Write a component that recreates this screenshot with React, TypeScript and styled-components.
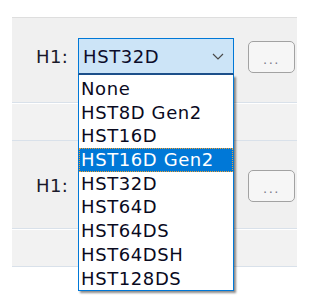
import React from 'react'
import styled, { createGlobalStyle } from 'styled-components'

const GlobalStyle = createGlobalStyle`
  html, body {
    margin: 0;
    background: #ffffff;
    font-family: 'DejaVu Sans', 'Liberation Sans', sans-serif;
  }
`

const Page = styled.div`
  padding: 17px 0 0 12px;
  width: 297px;
  min-height: 303px;
  box-sizing: border-box;
`

const Panel = styled.div`
  background: #f0f0f0;
  border-top: 1px solid #dedede;
`

const Group = styled.div<{ height: number; padTop: number }>`
  height: ${(props) => props.height}px;
  padding-top: ${(props) => props.padTop}px;
  box-sizing: border-box;
`

const Band = styled.div`
  height: 37px;
  background: #f2f2f2;
  border-top: 1px solid #d9e1ea;
  border-bottom: 1px solid #d9e1ea;
  box-shadow: inset 0 1px 0 #ffffff;
`

const Row = styled.div`
  display: flex;
  align-items: center;
`

const Label = styled.div`
  width: 56px;
  flex-shrink: 0;
  padding-right: 10px;
  text-align: right;
  font-size: 18px;
  letter-spacing: 0.3px;
  color: #1a1a2a;
`

const ComboWrap = styled.div`
  position: relative;
  flex-shrink: 0;
`

const Combo = styled.div<{ open?: boolean }>`
  width: 156px;
  height: 37px;
  box-sizing: border-box;
  display: flex;
  align-items: center;
  justify-content: space-between;
  padding: 0 9px 0 4px;
  background: ${(props) => (props.open ? '#cce4f7' : '#ffffff')};
  border: 1px solid ${(props) => (props.open ? '#0078d7' : '#7a7a7a')};
  border-bottom-width: ${(props) => (props.open ? 2 : 1)}px;
  border-bottom-color: ${(props) => (props.open ? '#1c4f8a' : '#7a7a7a')};
  font-size: 18px;
  letter-spacing: 0.6px;
  color: #0c0c2a;
`

const MoreButton = styled.div`
  width: 47px;
  height: 32px;
  flex-shrink: 0;
  margin-left: 14px;
  box-sizing: border-box;
  border: 1px solid #a2a2a2;
  border-radius: 5px;
  background: #f6f6f6;
  display: flex;
  align-items: center;
  justify-content: center;
  padding-top: 5px;
  font-size: 13px;
  letter-spacing: 1.5px;
  color: #7c7c8c;
`

const List = styled.div`
  position: absolute;
  top: 100%;
  left: 0;
  width: 156px;
  box-sizing: border-box;
  padding-top: 2px;
  background: #ffffff;
  border: 1px solid #0078d7;
  border-top: none;
  box-shadow: 2px 2px 2px rgba(0, 0, 0, 0.45);
  z-index: 10;
`

const Item = styled.div<{ selected?: boolean }>`
  height: 23.7px;
  line-height: 23.7px;
  padding-left: 2px;
  box-sizing: border-box;
  font-size: 18px;
  letter-spacing: 0.6px;
  white-space: nowrap;
  color: ${(props) => (props.selected ? '#ffffff' : '#0a0a1e')};
  background: ${(props) => (props.selected ? '#0078d7' : 'transparent')};
  outline: ${(props) => (props.selected ? '1px dotted #f0a030' : 'none')};
  outline-offset: -1px;
`

const Chevron = () => (
  <svg width="12" height="7" viewBox="0 0 12 7">
    <path d="M1 1 L6 6 L11 1" fill="none" stroke="#4a4a4a" strokeWidth="1.2" />
  </svg>
)

const options = [
  'None',
  'HST8D Gen2',
  'HST16D',
  'HST16D Gen2',
  'HST32D',
  'HST64D',
  'HST64DS',
  'HST64DSH',
  'HST128DS',
]

export default function App() {
  return (
    <>
      <GlobalStyle />
      <Page>
        <Panel>
          <Group height={84} padTop={20}>
            <Row>
              <Label>H1:</Label>
              <ComboWrap>
                <Combo open>
                  <span>HST32D</span>
                  <Chevron />
                </Combo>
                <List>
                  {options.map((option) => (
                    <Item key={option} selected={option === 'HST16D Gen2'}>
                      {option}
                    </Item>
                  ))}
                </List>
              </ComboWrap>
              <MoreButton>...</MoreButton>
            </Row>
          </Group>
          <Band />
          <Group height={87} padTop={26}>
            <Row>
              <Label>H1:</Label>
              {/* covered by the open list above */}
              <ComboWrap>
                <Combo />
              </ComboWrap>
              <MoreButton>...</MoreButton>
            </Row>
          </Group>
          <Band />
        </Panel>
      </Page>
    </>
  )
}
